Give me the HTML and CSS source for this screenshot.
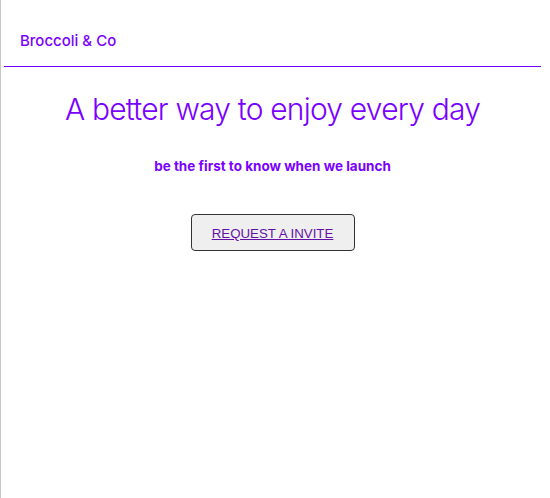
FILE: index.html
```html
<!DOCTYPE html>
<html lang="en">
<head>
<meta charset="utf-8">
<title>Broccoli & Co</title>
<link rel="stylesheet" href="styles.css">
</head>
<body>
<div class="page">
  <header class="header">
    <span class="brand">Broccoli &amp; Co</span>
  </header>
  <main class="hero">
    <h1 class="title">A better way to enjoy every day</h1>
    <p class="subtitle">be the first to know when we launch</p>
    <button class="invite" type="button"><a class="invite-link" href="#">REQUEST A INVITE</a></button>
  </main>
</div>
</body>
</html>
```
FILE: styles.css
```css
html, body {
  margin: 0;
  padding: 0;
  background: #fff;
}
body {
  border-left: 1px solid #c8c8c8;
  min-height: 498px;
  box-sizing: border-box;
  font-family: Inter, "Noto Sans", sans-serif;
  color: #7a00ff;
}
.page {
  margin: 0 9px 0 3px;
}
.header {
  height: 67px;
  border-bottom: 1px solid #7a00ff;
  display: flex;
  align-items: center;
  padding: 0 16px;
  box-sizing: border-box;
}
.brand {
  font-size: 15px;
  font-weight: 500;
  margin-top: 14px;
}
.hero {
  display: flex;
  flex-direction: column;
  align-items: center;
}
.title {
  margin: 22px 0 0;
  font-size: 30px;
  font-weight: 300;
  letter-spacing: -0.8px;
  line-height: 40px;
}
.subtitle {
  margin: 28px 0 0;
  font-size: 13.5px;
  font-weight: 700;
  line-height: 18px;
}
.invite {
  margin-top: 39px;
  width: 164px;
  height: 37px;
  background: #efefef;
  border: 1px solid #333;
  border-radius: 4px;
  font-family: "Liberation Sans", Arial, sans-serif;
  font-size: 13.3px;
  padding: 2px 0 0;
}
.invite-link {
  color: #6410a8;
  text-decoration: underline;
}
```
